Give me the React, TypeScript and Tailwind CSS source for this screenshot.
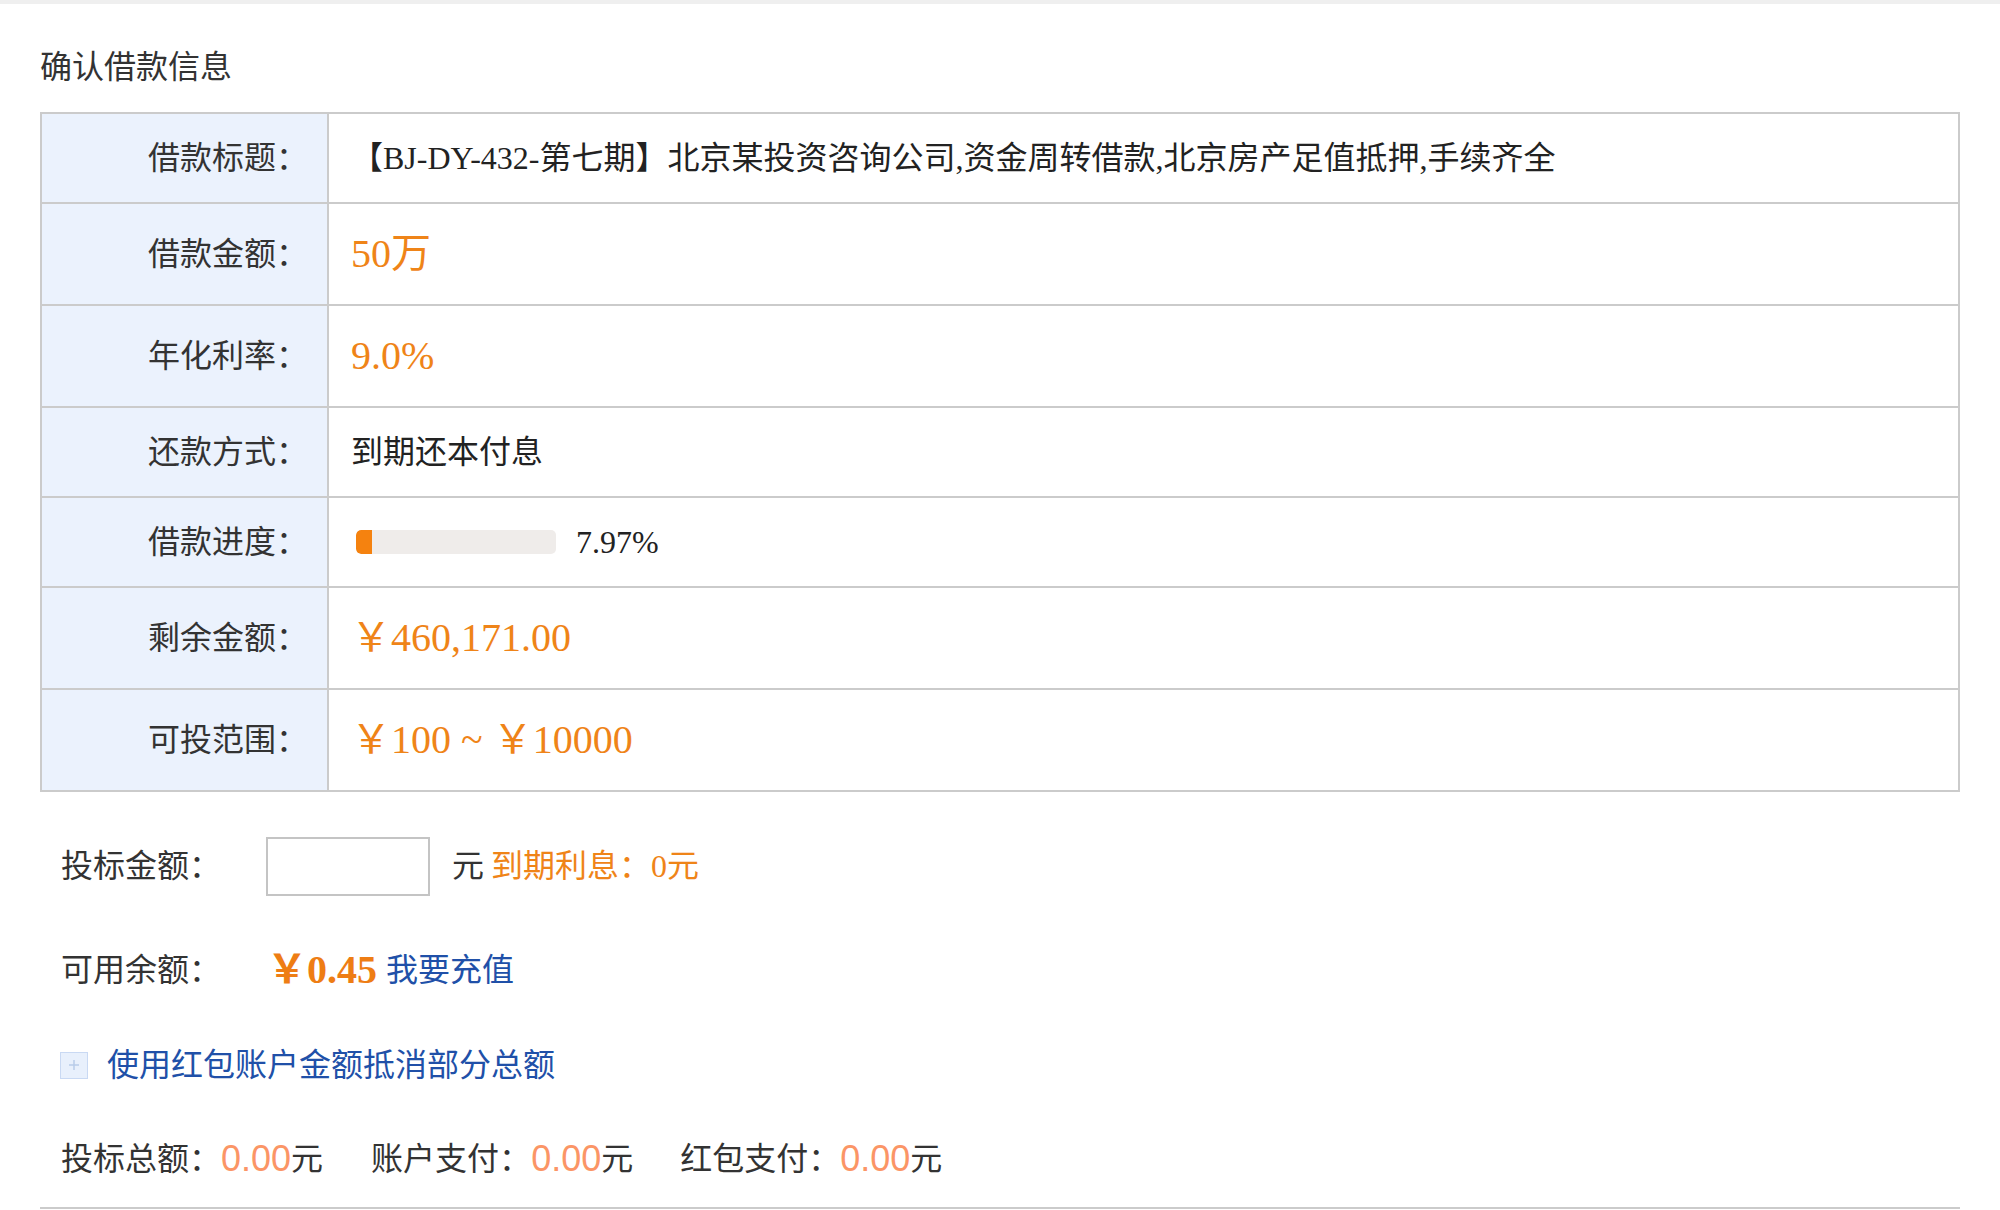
import React from "react";

const rows = [
  { label: "借款标题：", kind: "title", h: "h-[90px]" },
  { label: "借款金额：", kind: "amount", value: "50万", h: "h-[102px]" },
  { label: "年化利率：", kind: "amount", value: "9.0%", h: "h-[102px]" },
  { label: "还款方式：", kind: "text", value: "到期还本付息", h: "h-[90px]" },
  { label: "借款进度：", kind: "progress", value: "7.97%", h: "h-[90px]" },
  { label: "剩余金额：", kind: "amount", value: "￥460,171.00", h: "h-[102px]" },
  { label: "可投范围：", kind: "amount", value: "￥100 ~ ￥10000", h: "h-[102px]" },
];

const progress = 7.97;

function ValueCell({ row }: { row: (typeof rows)[number] }) {
  if (row.kind === "title") {
    return (
      <span className="text-[32px] text-[#222]">
        【BJ-DY-432-第七期】北京某投资咨询公司,资金周转借款,北京房产足值抵押,手续齐全
      </span>
    );
  }
  if (row.kind === "amount") {
    return <span className="text-[40px] text-[#ef8418]">{row.value}</span>;
  }
  if (row.kind === "progress") {
    return (
      <div className="flex items-center">
        <div className="ml-[5px] w-[200px] h-[24px] rounded-[5px] bg-[#efecea] overflow-hidden">
          <div className="h-full bg-[#f5820f] rounded-l-[5px]" style={{ width: `${progress * 2}px` }} />
        </div>
        <span className="ml-[20px] text-[32px] text-[#222]">{row.value}</span>
      </div>
    );
  }
  return <span className="text-[32px] text-[#222]">{row.value}</span>;
}

function Zero() {
  return (
    <>
      <span className="font-['Liberation_Sans',sans-serif] text-[36px] font-light text-[#fb9566]">0.00</span>
      <span>元</span>
    </>
  );
}

export default function App() {
  return (
    <div className="w-[2000px] min-h-[1210px] bg-white font-['Liberation_Serif','Noto_Sans_CJK_SC',serif] text-[#333]">
      <div className="h-[4px] bg-[#efefef]" />
      <div className="px-[40px]">
        <h1 className="mt-[47px] mb-[29px] text-[32px] leading-[32px] font-normal text-[#333]">确认借款信息</h1>

        <div className="border-2 border-b-0 border-[#cbcbcb]">
          {rows.map((row, i) => (
            <div key={i} className={`flex ${row.h} border-b-2 border-[#cbcbcb]`}>
              <div className="w-[287px] shrink-0 flex items-center justify-end pr-[19px] bg-[#ebf2fd] border-r-2 border-[#cbcbcb] text-[32px] text-[#333]">
                {row.label}
              </div>
              <div className="flex-1 flex items-center pl-[22px]">
                <ValueCell row={row} />
              </div>
            </div>
          ))}
        </div>

        <div className="pl-[21px] text-[32px] text-[#333]">
          <div className="mt-[44px] h-[60px] flex items-center">
            <span className="w-[205px]">投标金额：</span>
            <input className="w-[164px] h-[59px] border-2 border-[#c4c4c4] outline-none" />
            <span className="ml-[22px]">元</span>
            <span className="ml-[7px] text-[#ef8418]">到期利息：0元</span>
          </div>

          <div className="mt-[44px] h-[60px] flex items-center">
            <span className="w-[206px]">可用余额：</span>
            <span className="text-[40px] font-bold text-[#ee7d14]">￥0.45</span>
            <span className="ml-[9px] text-[#2050a8]">我要充值</span>
          </div>

          <div className="mt-[35px] h-[60px] flex items-center">
            <span className="-ml-[1px] w-[28px] h-[27px] bg-[#e8f0fc] border border-[#c9d9f3] flex items-center justify-center">
              <svg width="14" height="14" viewBox="0 0 14 14">
                <path d="M7 2v10M2 7h10" stroke="#b8cbe9" strokeWidth="1.5" />
              </svg>
            </span>
            <span className="ml-[19px] text-[#2050a8]">使用红包账户金额抵消部分总额</span>
          </div>

          <div className="mt-[34px] h-[60px] flex items-center">
            <span>投标总额：</span>
            <Zero />
            <span className="ml-[48px]">账户支付：</span>
            <Zero />
            <span className="ml-[47px]">红包支付：</span>
            <Zero />
          </div>
        </div>

        <div className="mt-[18px] h-[2px] bg-[#cbcbcb]" />
      </div>
    </div>
  );
}
